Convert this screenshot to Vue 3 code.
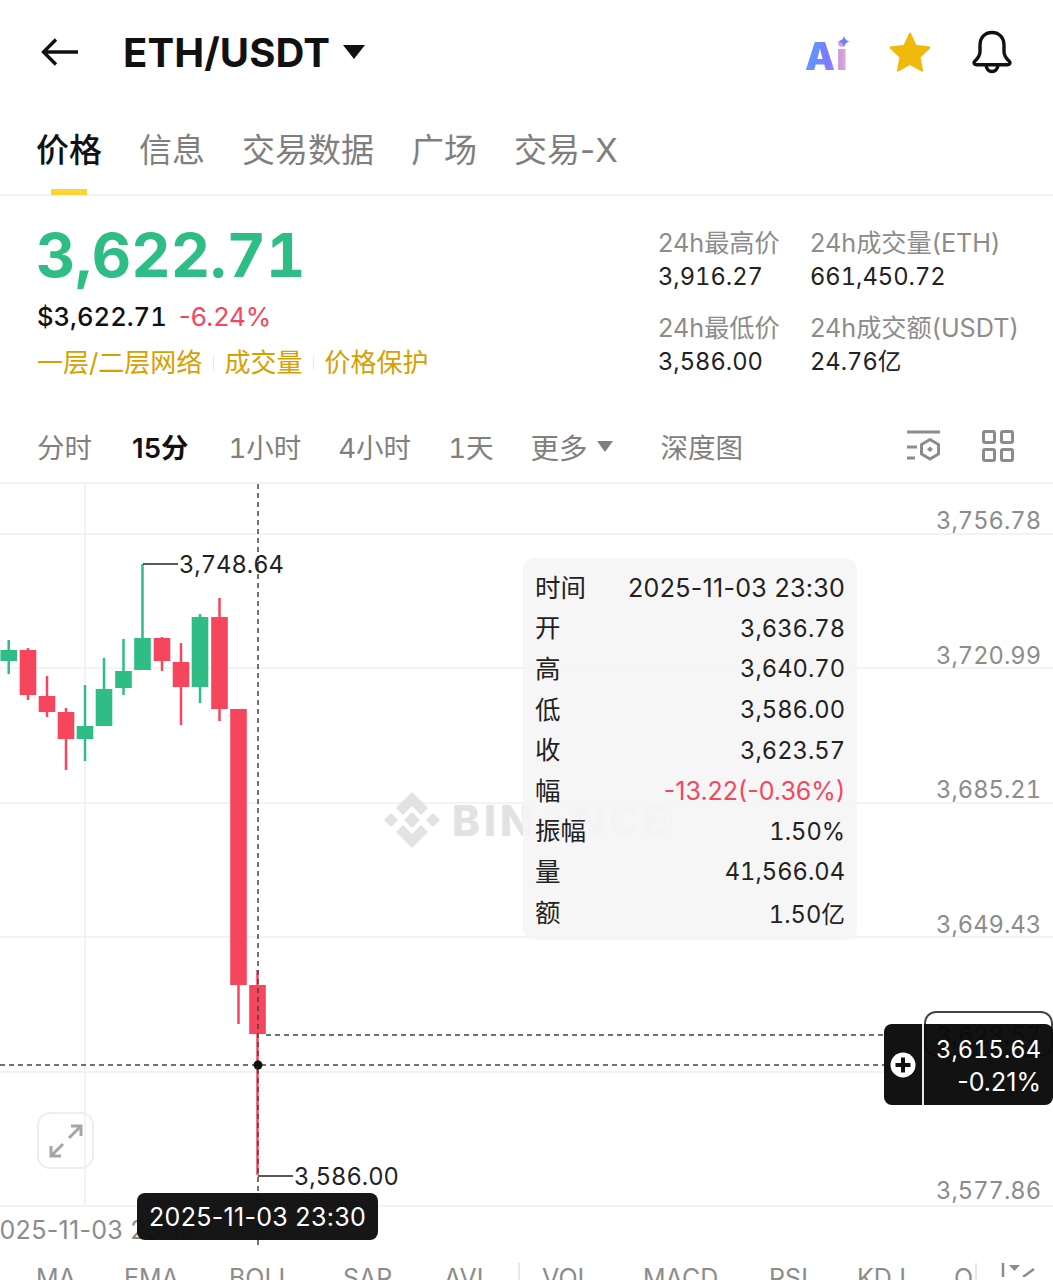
<template>
  <div class="page">
    <header class="topbar">
      <svg class="back" width="38" height="30" viewBox="0 0 38 30" fill="none" stroke="#111" stroke-width="3.4">
        <path d="M37 15H3M15 2.500 2.500 15 15 27.500" />
      </svg>
      <span class="pair">ETH/USDT</span>
      <span class="pair-caret"></span>
      <div class="top-icons">
        <div class="ai-icon">
          <span class="ai-text">Ai</span>
          <svg class="ai-spark" width="12" height="13" viewBox="0 0 14 14"><path d="M7 0c.8 4 2.600 6 7 7-4.400 1-6.200 3-7 7-.8-4-2.600-6-7-7 4.400-1 6.200-3 7-7Z" fill="#6f7dff" /></svg>
        </div>
        <svg width="42" height="40" viewBox="0 0 44 42"><path d="M22 1.500 28 14.500 42.500 16.300 32 26.200 34.800 40.500 22 33.400 9.200 40.500 12 26.200 1.500 16.300 16 14.500Z" fill="#f0b90b" stroke="#f0b90b" stroke-width="2" stroke-linejoin="round" /></svg>
        <svg width="42" height="44" viewBox="0 0 42 44" fill="none" stroke="#111" stroke-width="3.4" stroke-linejoin="round">
          <path d="M21 2.500c-7.500 0-12 5.500-12 13v6c0 4-1.800 6.500-5 9.500-1.800 1.700-1 3.700 1.400 3.700h31.200c2.400 0 3.200-2 1.400-3.700-3.200-3-5-5.500-5-9.500v-6c0-7.500-4.500-13-12-13Z" />
          <path d="M15 35c.4 4 2.800 6.500 6 6.500s5.600-2.500 6-6.500" />
        </svg>
      </div>
    </header>

    <nav class="tabs">
      <span v-for="(tab, i) in tabs" :key="tab" class="tab" :class="{ active: i === 0 }">{{ tab }}</span>
    </nav>

    <section class="summary">
      <div class="summary-left">
        <div class="last-price">3,622.71</div>
        <div class="fiat-row">
          <span class="fiat">$3,622.71</span>
          <span class="change">-6.24%</span>
        </div>
        <div class="links">
          <span>一层/二层网络</span>
          <i></i>
          <span>成交量</span>
          <i></i>
          <span>价格保护</span>
        </div>
      </div>
      <div class="stats">
        <div v-for="s in stats" :key="s.label" class="stat">
          <div class="stat-label">{{ s.label }}</div>
          <div class="stat-value">{{ s.value }}</div>
        </div>
      </div>
    </section>

    <div class="intervals">
      <span class="iv">分时</span>
      <span class="iv on">15分</span>
      <span class="iv">1小时</span>
      <span class="iv">4小时</span>
      <span class="iv">1天</span>
      <span class="iv more">更多<b class="more-caret"></b></span>
      <span class="iv depth">深度图</span>
      <div class="iv-icons">
        <svg width="36" height="32" viewBox="0 0 36 32" fill="none" stroke="#8c8c8c" stroke-width="3">
          <path d="M1 2h33M1 17h10M1 28h8" />
          <path d="M24 9.500 32.500 14.500V24L24 29 15.500 24V14.500Z" />
          <path d="M24 16.500 27 19.300 24 22 21 19.300Z" fill="#8c8c8c" stroke="none" />
        </svg>
        <svg width="32" height="32" viewBox="0 0 32 32" fill="none" stroke="#8c8c8c" stroke-width="3">
          <rect x="1.500" y="1.500" width="11" height="11" rx="1.500" />
          <rect x="19.500" y="1.500" width="11" height="11" rx="1.500" />
          <rect x="1.500" y="19.500" width="11" height="11" rx="1.500" />
          <rect x="19.500" y="19.500" width="11" height="11" rx="1.500" />
        </svg>
      </div>
    </div>

    <section class="chart">
      <svg class="plot" width="1053" height="761" viewBox="0 484 1053 761">
        <line v-for="y in gridY" :key="y" x1="0" x2="1053" :y1="y" :y2="y" stroke="#efefef" stroke-width="1.500" />
        <line x1="85" x2="85" y1="484" y2="1206" stroke="#efefef" stroke-width="1.500" />
        <g v-for="c in candles" :key="c.x">
          <line :x1="c.x" :x2="c.x" :y1="c.hi" :y2="c.lo" :stroke="c.color" stroke-width="2.500" />
          <rect :x="c.x - 8.300" :y="c.top" width="16.600" :height="c.bottom - c.top" :fill="c.color" />
        </g>
        <path d="M143 564H178" stroke="#222" stroke-width="1.500" fill="none" />
        <path d="M258 1176H293" stroke="#222" stroke-width="1.500" fill="none" />
        <line x1="266" x2="885" y1="1035" y2="1035" stroke="#444" stroke-width="1.300" stroke-dasharray="5 4" />
        <line x1="0" x2="885" y1="1065" y2="1065" stroke="#444" stroke-width="1.300" stroke-dasharray="5 4" />
        <line x1="258" x2="258" y1="484" y2="1245" stroke="#444" stroke-width="1.500" stroke-dasharray="5 4" />
        <circle cx="258" cy="1065" r="4.500" fill="#111" />
      </svg>

      <div class="watermark">
        <svg width="56" height="56" viewBox="0 0 56 56" fill="#e2e2e2">
          <path d="M28 0 44 16 37 23 28 14 19 23 12 16ZM28 56 12 40 19 33 28 42 37 33 44 40ZM7 21 14 28 7 35 0 28ZM49 21 56 28 49 35 42 28ZM28 20 36 28 28 36 20 28Z" />
        </svg>
        <span>BINANCE</span>
      </div>

      <span v-for="a in axis" :key="a.text" class="axis-label" :style="{ top: a.y - 484 - 16 + 'px' }">{{ a.text }}</span>
      <span class="extreme high">3,748.64</span>
      <span class="extreme low">3,586.00</span>
      <span class="x-label">2025-11-03 23:15</span>

      <div class="tooltip">
        <div v-for="r in tooltipRows" :key="r.k" class="tip-row">
          <span class="tip-key">{{ r.k }}</span>
          <span class="tip-val" :class="{ neg: r.neg, date: r.date }">{{ r.v }}</span>
        </div>
      </div>

      <div class="expand">
        <svg width="34" height="34" viewBox="0 0 34 34" fill="none" stroke="#a6a6a6" stroke-width="3">
          <path d="M20 14 32 2M22 2h10v10M14 20 2 32M2 22v10h10" />
        </svg>
      </div>

      <div class="last-tag">3,623.57</div>
      <div class="cross-tag">
        <div class="cross-plus">
          <svg width="26" height="26" viewBox="0 0 26 26">
            <circle cx="13" cy="13" r="12.500" fill="#fff" />
            <path d="M13 5.500v15M5.500 13h15" stroke="#111" stroke-width="4" />
          </svg>
        </div>
        <div class="cross-values">
          <span class="cross-price">3,615.64</span>
          <span class="cross-pct">-0.21%</span>
        </div>
      </div>
      <div class="time-tag">2025-11-03 23:30</div>
    </section>

    <div class="indicators">
      <span style="width: 88px">MA</span>
      <span style="width: 105px">EMA</span>
      <span style="width: 114px">BOLL</span>
      <span style="width: 101px">SAR</span>
      <span style="width: 74px">AVL</span>
      <i></i>
      <span style="width: 101px">VOL</span>
      <span style="width: 126px">MACD</span>
      <span style="width: 88px">RSI</span>
      <span style="width: 97px">KDJ</span>
      <span class="cut">O</span>
      <i></i>
      <svg class="ind-icon" width="34" height="14" viewBox="0 0 34 14" fill="none" stroke="#8c8c8c" stroke-width="2.500">
        <path d="M2 0v14M22 14l11-8" />
        <path d="M8 2h11l-5.500 6Z" fill="#8c8c8c" stroke="none" />
      </svg>
    </div>
  </div>
</template>

<script setup>
const tabs = ["价格", "信息", "交易数据", "广场", "交易-X"];

const stats = [
  { label: "24h最高价", value: "3,916.27" },
  { label: "24h成交量(ETH)", value: "661,450.72" },
  { label: "24h最低价", value: "3,586.00" },
  { label: "24h成交额(USDT)", value: "24.76亿" }
];

const gridY = [534, 668, 803, 937, 1072, 1206];

const axis = [
  { text: "3,756.78", y: 521 },
  { text: "3,720.99", y: 656 },
  { text: "3,685.21", y: 790 },
  { text: "3,649.43", y: 925 },
  { text: "3,577.86", y: 1191 }
];

const GREEN = "#2ebd85";
const RED = "#f6465d";

// x, wick top, wick bottom, body top, body bottom, colour
const candles = [
  [8.7, 640, 674, 650, 661, GREEN],
  [28, 648, 700, 650, 695, RED],
  [47, 676, 717, 696, 712, RED],
  [66, 708, 770, 712, 739, RED],
  [85, 685, 761, 726, 739, GREEN],
  [104, 658, 726, 689, 726, GREEN],
  [123.5, 639, 695, 671, 688, GREEN],
  [142.5, 564, 670, 638, 670, GREEN],
  [162, 637, 671, 638, 661, RED],
  [181, 643, 725, 662, 687, RED],
  [200, 614, 703, 617, 687, GREEN],
  [219.5, 598, 721, 617, 709, RED],
  [238.5, 709, 1024, 709, 985, RED],
  [257.5, 970, 1175, 985, 1034, RED]
].map(([x, hi, lo, top, bottom, color]) => ({ x, hi, lo, top, bottom, color }));

const tooltipRows = [
  { k: "时间", v: "2025-11-03 23:30", date: true },
  { k: "开", v: "3,636.78" },
  { k: "高", v: "3,640.70" },
  { k: "低", v: "3,586.00" },
  { k: "收", v: "3,623.57" },
  { k: "幅", v: "-13.22(-0.36%)", neg: true },
  { k: "振幅", v: "1.50%" },
  { k: "量", v: "41,566.04" },
  { k: "额", v: "1.50亿" }
];
</script>

<style>
html,
body {
  margin: 0;
  background: #fff;
  overflow: hidden;
}
</style>

<style scoped>
.page {
  width: 1053px;
  height: 1280px;
  overflow: hidden;
  background: #fff;
  color: #1a1a1a;
  font-family: Inter, "Noto Sans CJK SC", sans-serif;
}

.topbar {
  height: 104px;
  display: flex;
  align-items: center;
  padding: 0 40px 0 41px;
  box-sizing: border-box;
}

.pair {
  margin-left: 44px;
  font-size: 40px;
  font-weight: 700;
  color: #111;
  letter-spacing: 0.1px;
}

.pair-caret {
  margin-left: 13px;
  border-left: 11px solid transparent;
  border-right: 11px solid transparent;
  border-top: 14px solid #111;
}

.top-icons {
  margin-left: auto;
  display: flex;
  align-items: center;
  gap: 40px;
}

.ai-icon {
  position: relative;
  width: 44px;
  height: 40px;
}

.ai-text {
  position: absolute;
  left: 0;
  bottom: -4px;
  font-size: 38px;
  line-height: 40px;
  font-weight: 900;
  letter-spacing: 1px;
  background: linear-gradient(90deg, #5b9bff 0%, #7a7cff 55%, #c99be0 80%, #eeb0c0 100%);
  -webkit-background-clip: text;
  background-clip: text;
  color: transparent;
}

.ai-spark {
  position: absolute;
  right: -1px;
  top: 3px;
}

.tabs {
  height: 92px;
  display: flex;
  align-items: center;
  gap: 37px;
  padding: 2px 36px 0;
  box-sizing: border-box;
  border-bottom: 2px solid #f2f2f2;
}

.tab {
  position: relative;
  font-size: 33px;
  color: #7f7f7f;
  line-height: 46px;
}

.tab.active {
  color: #111;
  font-weight: 500;
}

.tab.active::after {
  content: "";
  position: absolute;
  left: 15px;
  width: 36px;
  top: 62px;
  height: 6px;
  background: #fcd535;
}

.summary {
  height: 220px;
  display: flex;
  justify-content: space-between;
  box-sizing: border-box;
}

.summary-left {
  padding: 24px 0 0 37px;
}

.last-price {
  margin-left: -1px;
  font-size: 61px;
  line-height: 70px;
  font-weight: 700;
  color: #2ebd85;
  font-variant-numeric: tabular-nums;
}

.fiat-row {
  display: flex;
  gap: 12px;
  margin-top: 9px;
  font-size: 26px;
  line-height: 36px;
}

.fiat {
  color: #111;
  font-weight: 500;
  font-size: 25.600px;
  font-variant-numeric: tabular-nums;
}

.change {
  color: #f6465d;
}

.links {
  margin-top: 10px;
  display: flex;
  align-items: center;
  gap: 10.500px;
  font-size: 26px;
  line-height: 36px;
  color: #d89f00;
}

.links i {
  width: 1px;
  height: 14px;
  background: #e8e8e8;
}

.stats {
  width: 395px;
  padding-top: 30px;
  display: grid;
  grid-template-columns: 152px auto;
  align-content: start;
  row-gap: 17px;
  font-size: 25.200px;
  line-height: 34px;
}

.stat-label {
  color: #8c8c8c;
}

.stat-value {
  color: #222;
  font-size: 23.700px;
  font-variant-numeric: tabular-nums;
}

.intervals {
  height: 70px;
  display: flex;
  align-items: center;
  padding: 0 0 4px 37px;
  font-size: 27.500px;
  color: #808080;
  box-sizing: border-box;
  border-bottom: 2px solid #f2f2f2;
  margin-top: -2px;
  font-variant-numeric: tabular-nums;
}

.iv {
  margin-right: 37px;
  white-space: nowrap;
}

.iv:first-child,
.iv.on {
  margin-right: 40px;
}

.iv.on {
  color: #111;
  font-weight: 600;
  font-variant-numeric: normal;
}

.iv.more {
  display: inline-flex;
  align-items: center;
  gap: 10px;
  margin-right: 47px;
  font-size: 28.500px;
}

.more-caret {
  width: 0;
  border-left: 8.500px solid transparent;
  border-right: 8.500px solid transparent;
  border-top: 11px solid #808080;
}

.iv-icons {
  margin-left: auto;
  display: flex;
  gap: 40px;
  padding-right: 39px;
}

.chart {
  position: relative;
  height: 761px;
  overflow: hidden;
}

.plot {
  position: absolute;
  left: 0;
  top: 0;
}

.watermark {
  position: absolute;
  left: 384px;
  top: 308px;
  display: flex;
  align-items: center;
  gap: 12px;
  font-size: 42px;
  font-weight: 800;
  letter-spacing: 4px;
  color: #e2e2e2;
}

.axis-label {
  position: absolute;
  right: 12px;
  font-size: 23.700px;
  line-height: 32px;
  color: #8c8c8c;
  font-variant-numeric: tabular-nums;
}

.extreme {
  position: absolute;
  font-size: 23.700px;
  line-height: 30px;
  color: #222;
  font-variant-numeric: tabular-nums;
}

.extreme.high {
  left: 179px;
  top: 66px;
}

.extreme.low {
  left: 294px;
  top: 678px;
}

.x-label {
  position: absolute;
  left: -16px;
  top: 730px;
  font-size: 25px;
  line-height: 32px;
  letter-spacing: 0.3px;
  color: #8c8c8c;
  white-space: nowrap;
}

.tooltip {
  position: absolute;
  left: 523px;
  top: 74px;
  width: 334px;
  height: 382px;
  box-sizing: border-box;
  padding: 10px 12px 0;
  border-radius: 12px;
  background: rgba(245, 245, 245, 0.92);
  font-size: 25.500px;
  color: #222;
}

.tip-row {
  height: 40.600px;
  display: flex;
  align-items: center;
  justify-content: space-between;
}

.tip-key {
  margin-bottom: 6px;
}

.tip-val {
  margin-bottom: 1px;
  font-size: 23.700px;
  font-variant-numeric: tabular-nums;
}

.tip-val.date {
  font-size: 25px;
  letter-spacing: 0.3px;
  font-variant-numeric: normal;
}

.tip-val.neg {
  color: #f6465d;
  font-size: 25px;
  font-variant-numeric: normal;
}

.expand {
  position: absolute;
  left: 37px;
  top: 628px;
  width: 57px;
  height: 57px;
  box-sizing: border-box;
  border: 2px solid #eeeeee;
  border-radius: 13px;
  display: flex;
  align-items: center;
  justify-content: center;
}

.last-tag {
  position: absolute;
  left: 924px;
  top: 527px;
  width: 129px;
  height: 46px;
  box-sizing: border-box;
  border: 2px solid #444;
  border-radius: 12px;
  padding-right: 10px;
  text-align: right;
  font-size: 23.700px;
  line-height: 46px;
  color: #222;
  font-variant-numeric: tabular-nums;
}

.cross-tag {
  position: absolute;
  left: 884px;
  top: 540px;
  width: 169px;
  height: 81px;
  display: flex;
  border-radius: 8px;
  background: rgba(10, 10, 10, 0.97);
  overflow: hidden;
}

.cross-plus {
  width: 38px;
  flex: none;
  display: flex;
  align-items: center;
  justify-content: center;
  border-right: 2px solid #e8e8e8;
}

.cross-values {
  flex: 1;
  display: flex;
  flex-direction: column;
  align-items: flex-end;
  justify-content: center;
  padding: 2px 12px 0 0;
  line-height: 33px;
  color: #fff;
}

.cross-price {
  font-size: 23.700px;
  font-variant-numeric: tabular-nums;
}

.cross-pct {
  font-size: 25px;
}

.time-tag {
  position: absolute;
  left: 137px;
  top: 709px;
  width: 241px;
  height: 47px;
  display: flex;
  align-items: center;
  justify-content: center;
  border-radius: 8px;
  background: rgba(14, 14, 14, 0.97);
  font-size: 25px;
  letter-spacing: 0.3px;
  color: #fff;
}

.indicators {
  height: 35px;
  display: flex;
  align-items: flex-start;
  padding: 18px 0 0 36px;
  box-sizing: border-box;
  font-size: 25px;
  line-height: 30px;
  color: #8c8c8c;
  white-space: nowrap;
}

.indicators span {
  flex: none;
}

.indicators i {
  width: 2px;
  height: 20px;
  background: #e8e8e8;
  flex: none;
}

.indicators i:nth-of-type(1) {
  margin-right: 22px;
}

.cut {
  width: 21px;
  overflow: hidden;
}

.ind-icon {
  margin-left: 24px;
}
</style>
